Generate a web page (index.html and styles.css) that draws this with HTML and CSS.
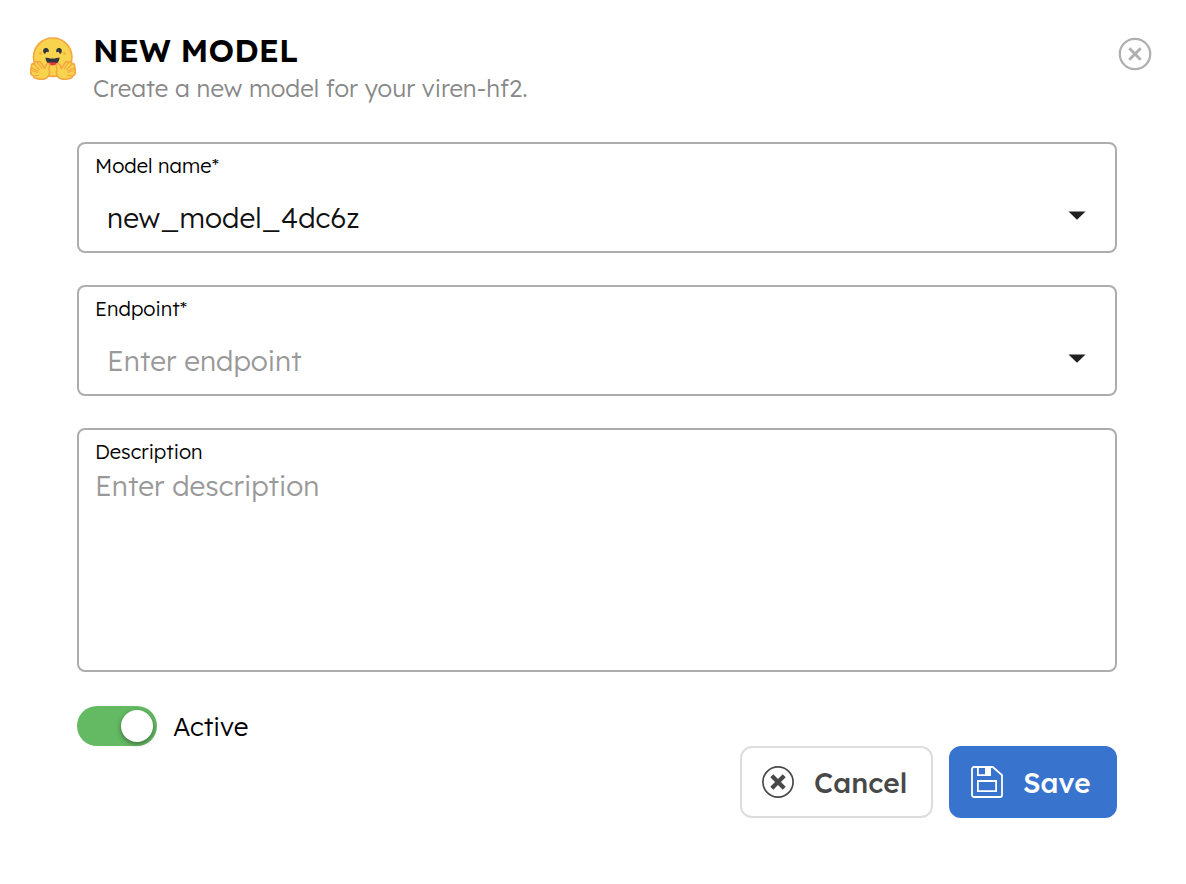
FILE: index.html
```html
<!DOCTYPE html>
<html lang="en">
<head>
<meta charset="utf-8">
<title>New model</title>
<link rel="stylesheet" href="styles.css">
</head>
<body>
<main class="dialog">
  <header class="header">
    <svg class="logo" viewBox="0 0 46 43" aria-hidden="true">
      <circle cx="22.700" cy="20.200" r="19.200" fill="#f8d44e" stroke="#f4a641" stroke-width="1.700"/>
      <path id="eye" d="M13.400 15.600c-.9-3 .6-4.600 2.600-4.600 2.300 0 3.200 2 2.700 4-.8.900-1.400-.4-2.200-.1-1.300.4-.8 2-1.600 2-.6 0-.9-.9-1.500-1.300z" fill="#30343c"/>
      <use href="#eye" transform="matrix(-1 0 0 1 45 0)"/>
      <circle cx="10.600" cy="16.400" r="1.600" fill="#f8b43f"/><circle cx="34.600" cy="16.400" r="1.600" fill="#f8b43f"/>
      <path d="M15.500 20.600c.2 5 3.300 7.600 7 7.600s6.800-2.600 7-7.600c0-.8-3 1-7 1s-7-1.800-7-1z" fill="#30343c"/>
      <path d="M18.600 26.700c1.200-2 2.700-1.600 3.900-1 1.200-.6 2.700-1 3.900 1-2 2-5.800 2-7.800 0z" fill="#ef3342"/>
      <g id="hand" fill="#f8d44e" stroke="#f4a641" stroke-width="1.600" stroke-linejoin="round" stroke-linecap="round">
        <path d="M1.700 28.800c-.6-2 1.200-2.900 2.700-1.500-.7-2.300 1.800-3.500 3.200-1.500.3-1.900 2.500-1.700 3.400.1l3.500 5.600c1.200-1.500 1.300-5.200 3.600-5.200 2.300.2 1.500 3.400.9 5.600 1.200 4.100.3 7.200-1.800 8.800-3.200 2.300-8.500 1.700-12.200.4-1.500-.5-1.700-1.500-1.200-2.300-2.300-.4-3.300-1.500-2.500-2.800-1.400-.8-1.200-2.200 0-2.700C-.2 32.500 0 30.800 1.800 31c-.7-.8-.7-1.600-.1-2.200z"/>
        <path d="M4.400 27.300l5 5.200M7.600 25.800l4 5.500M1.800 30.900l6.400 3.200M1.300 33.300l6.500 2.200M3.800 38.800l4.500-.4" fill="none" stroke-width="1.100"/>
      </g>
      <use href="#hand" transform="matrix(-1 0 0 1 46 0)"/>
    </svg>
    <div class="heading">
      <h1 class="title">NEW MODEL</h1>
      <p class="subtitle">Create a new model for your viren-hf2.</p>
    </div>
    <svg class="close" viewBox="0 0 34 34" fill="none" stroke="#b0b0b0" role="img" aria-label="Close">
      <circle cx="17" cy="17" r="15.200" stroke-width="2.300"/>
      <path d="M11.300 11.300l11.400 11.400M22.700 11.300L11.300 22.700" stroke-width="2.900"/>
    </svg>
  </header>
  <form class="form">
    <div class="field">
      <span class="label">Model name*</span>
      <div class="select"><span class="value">new_model_4dc6z</span><svg class="caret" viewBox="0 0 18 9"><path d="M.5.5h17L9 8.800z" fill="#202020"/></svg></div>
    </div>
    <div class="field">
      <span class="label">Endpoint*</span>
      <div class="select"><span class="placeholder">Enter endpoint</span><svg class="caret" viewBox="0 0 18 9"><path d="M.5.5h17L9 8.800z" fill="#202020"/></svg></div>
    </div>
    <div class="field field-tall">
      <span class="label">Description</span>
      <span class="placeholder hint-description">Enter description</span>
    </div>
    <div class="status"><span class="toggle"><span class="knob"></span></span><span>Active</span></div>
    <div class="actions">
      <button type="button" class="button cancel">
        <svg class="icon" viewBox="0 0 32 32" fill="none" stroke="#484848"><circle cx="16" cy="16" r="15.100" stroke-width="1.700"/><path d="M9.800 9.800l12.400 12.400M22.200 9.800L9.800 22.200" stroke-width="4.200"/></svg>
        <span>Cancel</span>
      </button>
      <button type="button" class="button save">
        <svg class="icon" viewBox="0 0 32 32" fill="none" stroke="#fff" stroke-width="1.800"><path d="M3 1h18.800L31 9.200V29a2 2 0 0 1-2 2H3a2 2 0 0 1-2-2V3a2 2 0 0 1 2-2z"/><path d="M6.900 1v8.200h12.200V1M6.900 15h18.200v10.200H6.900z"/><path d="M14 1h5v8h-5z" fill="#fff" stroke="none"/></svg>
        <span>Save</span>
      </button>
    </div>
  </form>
</main>
</body>
</html>
```
FILE: styles.css
```css
* { box-sizing: border-box; }
body { margin: 0; background: #fff; color: #000; font-family: Lexend, Inter, "Open Sans", sans-serif; font-weight: 300; }
.dialog { height: 884px; padding: 30px 34px 0 30px; overflow: hidden; }
.header { display: flex; align-items: flex-start; height: 112px; }
.logo { width: 46px; height: 43px; margin: 7px 17px 0 0; flex: none; }
.heading { flex: 1; white-space: nowrap; }
.title { margin: 0; font-size: 32px; line-height: 40px; font-weight: 600; }
.subtitle { margin: 3px 0 0; font-size: 24px; line-height: 30px; color: #888; }
.close { width: 34px; height: 34px; margin-top: 7px; flex: none; }
.form { display: flex; flex-direction: column; margin: 0 35px 0 47px; }
.field { display: flex; flex-direction: column; height: 111px; margin-bottom: 32px; padding: 9px 17px 0 16px; border: 2px solid #adadad; border-radius: 8px; }
.field-tall { height: 244px; margin-bottom: 34px; }
.label { font-size: 20px; line-height: 26px; }
.select { display: flex; justify-content: space-between; align-items: center; padding: 19px 12px 0 12px; }
.value, .placeholder { font-size: 28px; line-height: 40px; }
.value { color: #111; }
.placeholder { color: #999; }
.placeholder.hint-description { line-height: 42px; }
.caret { width: 18px; height: 9px; margin-bottom: 5px; }
.status { display: flex; align-items: center; gap: 16px; height: 40px; font-size: 26px; }
.toggle { display: flex; justify-content: flex-end; width: 80px; height: 40px; padding: 4px; border-radius: 20px; background: #64b963; }
.knob { width: 32px; height: 32px; border-radius: 50%; background: #fff; box-shadow: 0 2px 5px rgba(0,0,0,.4); }
.actions { display: flex; justify-content: flex-end; gap: 16px; }
.button { display: flex; align-items: center; height: 72px; padding: 0 0 0 20px; gap: 20px; border: 2px solid #ddd; border-radius: 12px; background: #fff; color: #484848; font: inherit; font-size: 28px; font-weight: 500; }
.cancel { width: 193px; }
.save { width: 168px; border-color: #3874cd; background: #3874cd; color: #fff; }
.icon { width: 32px; height: 32px; flex: none; }
```
